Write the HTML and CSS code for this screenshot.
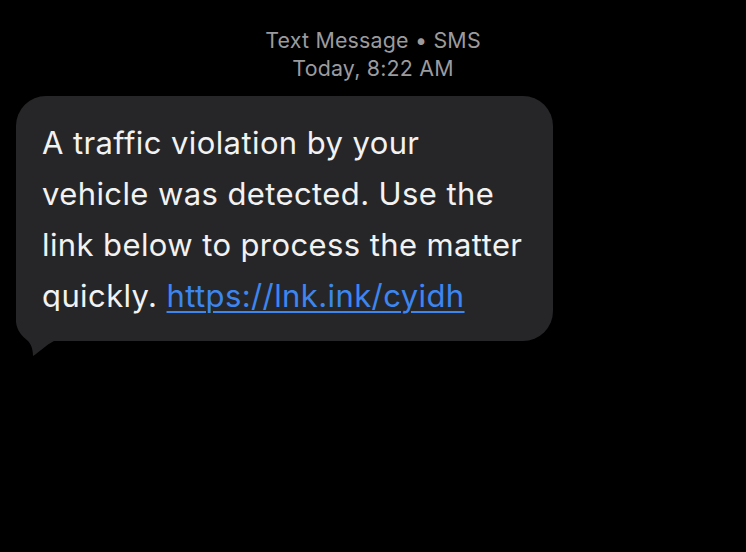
FILE: index.html
```html
<!DOCTYPE html>
<html lang="en">
<head>
    <meta charset="UTF-8">
    <meta name="viewport" content="width=device-width, initial-scale=1.0">
    <title>Messages</title>
    <link rel="stylesheet" href="styles.css">
</head>
<body>
    <div class="thread">
        <div class="meta">
            <div>Text Message &bull; SMS</div>
            <div>Today, 8:22 AM</div>
        </div>
        <div class="bubble">
            <p>A traffic violation by your<br>vehicle was detected. Use the<br>link below to process the matter<br>quickly. <a href="#">https://lnk.ink/cyidh</a></p>
            <svg class="tail" width="50" height="46" viewBox="0 0 50 46">
                <path d="M0 0 L0 11 C1 20 6 25 12 30 C15 33 17 38 17 45 C22 42 30 34 38 30 L50 30 L50 0 Z" />
            </svg>
        </div>
    </div>
</body>
</html>
```

FILE: styles.css
```css
body {
    margin: 0;
    background-color: #000;
    font-family: Inter, "Noto Sans", sans-serif;
    color: #f2f2f2;
}

.thread {
    min-height: 100vh;
    box-sizing: border-box;
    padding-top: 26px;
}

.meta {
    text-align: center;
    color: #9b9b9f;
    font-size: 21.4px;
    line-height: 28px;
    letter-spacing: 0.2px;
    width: 746px;
}

.bubble {
    position: relative;
    margin: 14px 0 0 16px;
    width: 537px;
    box-sizing: border-box;
    padding: 21px 20px 20px 26px;
    background-color: #262629;
    border-radius: 30px;
}

.bubble p {
    margin: 0;
    font-size: 31px;
    line-height: 51px;
    letter-spacing: 0.4px;
    white-space: nowrap;
}

.bubble a {
    color: #3d86f0;
    text-decoration: underline;
    text-underline-offset: 4px;
    text-decoration-thickness: 2px;
}

.tail {
    position: absolute;
    left: 0;
    bottom: -16px;
    fill: #262629;
}
```
